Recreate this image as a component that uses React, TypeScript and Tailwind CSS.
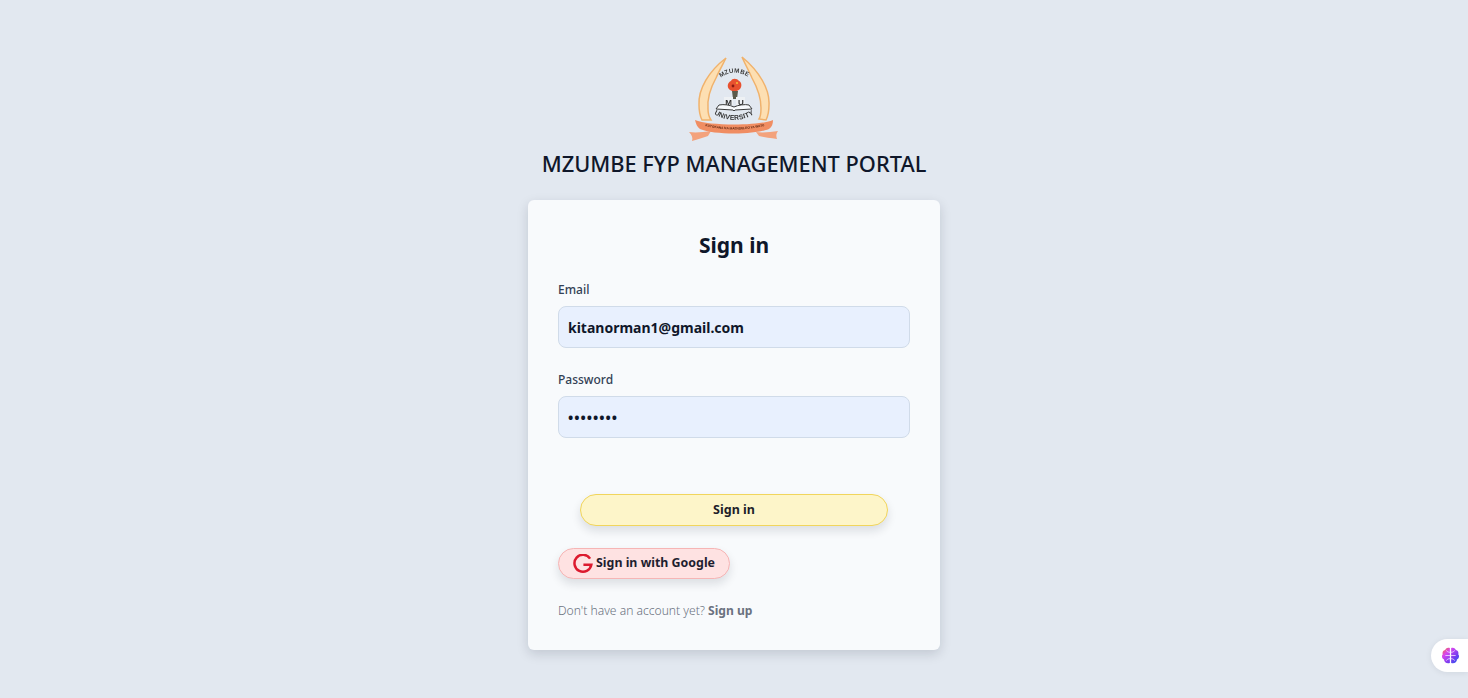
const font = { fontFamily: '"Noto Sans", sans-serif' };
const lib = 'Liberation Sans, sans-serif';

function Logo() {
  return (
    <svg width="130" height="105" viewBox="0 0 130 105" className="block" style={{ filter: 'blur(0.4px)' }}>
      <path d="M57 13 C40 26 29 44 30 60 C30 66 31 71 33 75 L42 75 C40 72 39 69 39 64 C38 53 42 42 47 33 C50 26 54 19 57 13 Z" fill="#fddfb2" stroke="#f0b26c" strokeWidth="1.5" />
      <path d="M73 12 C90 26 101 44 100 60 C100 66 99 71 97 75 L90 74 C92 71 92 68 92 63 C92 53 88 42 83 33 C80 26 76 19 73 12 Z" fill="#fddfb2" stroke="#f0b26c" strokeWidth="1.5" />
      <path id="arcTop" d="M50 34 Q65 22 81 33" fill="none" />
      <text fontSize="6.2" fontWeight="700" fill="#3b3b3b" letterSpacing="0.4" fontFamily={lib}>
        <textPath href="#arcTop" startOffset="50%" textAnchor="middle">MZUMBE</textPath>
      </text>
      <path d="M61 45 C57 42 59 37 62 36 C63 33 68 33 70 36 C73 37 73 42 71 44 C68 47 64 47 61 45 Z" fill="#e8512f" />
      <circle cx="64" cy="41" r="1.4" fill="#8a1c12" />
      <circle cx="68" cy="38" r="1.1" fill="#f7b733" />
      <path d="M63 46 L69 46 L68 54 L64 54 Z" fill="#5a5a4a" />
      <rect x="55" y="52" width="9" height="8" fill="#eef1f4" />
      <rect x="67" y="52" width="9" height="8" fill="#eef1f4" />
      <text x="59.5" y="60" fontSize="8" fontWeight="700" textAnchor="middle" fill="#2d2d2d" fontFamily={lib}>M</text>
      <text x="72" y="60" fontSize="8" fontWeight="700" textAnchor="middle" fill="#2d2d2d" fontFamily={lib}>U</text>
      <path d="M47 64 L50 60 C55 59 61 60 65 62 C69 60 76 59 80 60 L83 64 L66 65 L65 66 L64 65 Z" fill="#f8fafc" stroke="#3a3a3a" strokeWidth="1" />
      <path id="arcBottom" d="M42 67 Q65 83 88 67" fill="none" />
      <text fontSize="6.8" fontWeight="700" fill="#333" letterSpacing="0.2" fontFamily={lib}>
        <textPath href="#arcBottom" startOffset="50%" textAnchor="middle">UNIVERSITY</textPath>
      </text>
      <path d="M20 87 C27 88 35 87 42 86 L39 91 C34 93 29 94 23 96 C24 93 23 90 20 87 Z" fill="#f3a27c" />
      <path d="M87 87 C94 88 102 87 109 86 C107 89 107 91 108 94 C101 93 95 92 90 91 Z" fill="#f3a27c" />
      <path d="M26 75 C40 81 90 81 104 75 C104 79 103 82 100 84 C85 90 45 90 31 84 C28 82 27 79 26 75 Z" fill="#f08d62" />
      <path id="arcBanner" d="M36 81 Q65 88 96 81" fill="none" />
      <text fontSize="3.2" fontWeight="700" fill="#5b2410" fontFamily={lib}>
        <textPath href="#arcBanner" startOffset="50%" textAnchor="middle">KUTOKANA NA MAENDELEO YA WATU</textPath>
      </text>
    </svg>
  );
}

function Field({ label, value, password }: { label: string; value: string; password?: boolean }) {
  return (
    <div className="flex flex-col">
      <label className="text-[12px] leading-[18px] font-medium text-[#334155]" style={font}>{label}</label>
      <div className={`mt-[7px] h-[42px] flex items-center px-[9px] rounded-lg border border-[#d0dbe9] bg-[#e8f0fe] text-[#0f172a] font-bold text-[14px] ${password ? 'tracking-[1px]' : ''}`} style={font}>
        {value}
      </div>
    </div>
  );
}

export default function App() {
  return (
    <div className="h-[698px] overflow-hidden bg-[#e2e8f0] flex flex-col items-center pt-[45px] relative" style={font}>
      <Logo />
      <h1 className="text-[21.8px] leading-[28px] font-medium text-[#0f172a]">MZUMBE FYP MANAGEMENT PORTAL</h1>
      <div className="mt-[22px] w-[412px] h-[450px] bg-[#f8fafc] rounded-md shadow-[0_4px_12px_rgba(15,23,42,0.15)] px-[30px] pt-[28px]">
        <h2 className="text-center text-[21px] leading-[34px] font-bold text-[#0f172a]">Sign in</h2>
        <div className="mt-[19px] flex flex-col gap-[23px]">
          <Field label="Email" value="kitanorman1@gmail.com" />
          <Field label="Password" value="••••••••" password />
        </div>
        <div className="mt-[56px] flex justify-center">
          <button className="w-[308px] h-[32px] rounded-full bg-[#fdf5c9] border border-[#f1d55c] text-[12.5px] font-bold text-[#1e1e2a] shadow-[0_5px_10px_rgba(15,23,42,0.12)]">Sign in</button>
        </div>
        <button className="mt-[22px] w-[172px] h-[31px] rounded-full bg-[#fee2e2] border border-[#f6b5b5] flex items-center justify-center gap-[3px] text-[12.4px] font-bold text-[#1e1e2f] shadow-[0_5px_10px_rgba(15,23,42,0.12)]">
          <svg width="20" height="20" viewBox="0 0 24 24" fill="none" stroke="#dc1a2e" strokeWidth="3">
            <path d="M20.5 5.5 A10.2 10.2 0 1 0 22 13 H12.5" />
          </svg>
          <span>Sign in with Google</span>
        </button>
        <p className="mt-[23px] text-[12.1px] leading-[18px] font-light text-[#6b7280]">
          Don't have an account yet? <span className="font-bold text-[#6b7280]">Sign up</span>
        </p>
      </div>
      <div className="absolute right-0 top-[639px] w-[37px] h-[33px] bg-white rounded-l-full flex items-center pl-[10px] shadow-[0_1px_6px_rgba(15,23,42,0.08)]">
        <svg width="19" height="19" viewBox="0 0 24 24" fill="none" strokeLinecap="round">
          <defs>
            <linearGradient id="brainGradient" x1="0" y1="0" x2="1" y2="1">
              <stop offset="0" stopColor="#f97316" />
              <stop offset="0.3" stopColor="#d946ef" />
              <stop offset="0.7" stopColor="#6d3df0" />
              <stop offset="1" stopColor="#2563eb" />
            </linearGradient>
          </defs>
          <path fill="url(#brainGradient)" d="M11.2 2.5 C8 1.2 5.8 3 5.3 5 C2.8 5.5 1.2 8 2.2 10.5 C0.4 12.5 1 16 3.8 17 C4 20.5 7.2 22.8 11.2 21.5 Z M12.8 2.5 C16 1.2 18.2 3 18.7 5 C21.2 5.5 22.8 8 21.8 10.5 C23.6 12.5 23 16 20.2 17 C20 20.5 16.8 22.8 12.8 21.5 Z" />
          <path stroke="#ecd5ff" strokeWidth="1.1" d="M11 8 C9 8 8 7 7 6 M11 12 H6 M11 16 C9 16 8 17 7 18 M13 8 C15 8 16 7 17 6 M13 12 H18 M13 16 C15 16 16 17 17 18" />
        </svg>
      </div>
    </div>
  );
}
